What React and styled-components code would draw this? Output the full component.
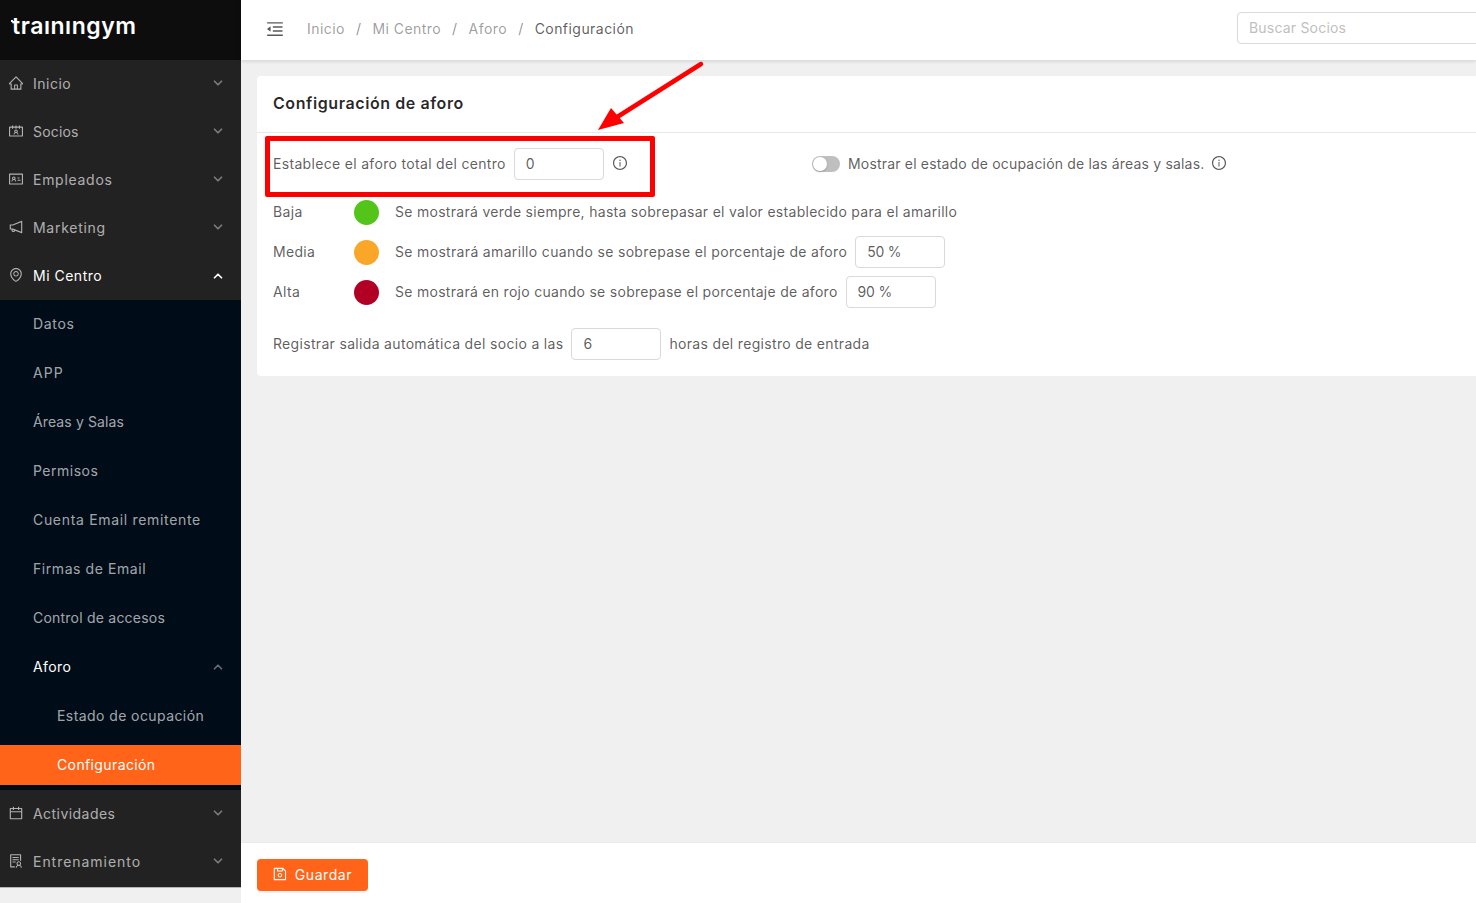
import React from "react";
import styled, { createGlobalStyle } from "styled-components";
import {
  AiOutlineHome,
  AiOutlineContacts,
  AiOutlineIdcard,
  AiOutlineNotification,
  AiOutlineEnvironment,
  AiOutlineCalendar,
  AiOutlineSolution,
  AiOutlineSave,
  AiOutlineInfoCircle,
  AiOutlineMenuFold,
} from "react-icons/ai";
import { ChevronDown, ChevronUp } from "lucide-react";

const Global = createGlobalStyle`
  html, body { margin: 0; padding: 0; height: 100%; overflow: hidden; }
  body {
    background: #f0f0f0;
    font-family: Inter, "Noto Sans", "Liberation Sans", sans-serif;
    font-size: 14px;
    letter-spacing: 0.33px;
  }
  * { box-sizing: border-box; }
`;

// track = letter spacing per label
const topBefore = [
  { label: "Inicio", Icon: AiOutlineHome, track: 0.5 },
  { label: "Socios", Icon: AiOutlineContacts, track: 0.17 },
  { label: "Empleados", Icon: AiOutlineIdcard, track: 0.72 },
  { label: "Marketing", Icon: AiOutlineNotification, track: 0.72 },
];
const subItems = [
  { label: "Datos", track: 0.7 },
  { label: "APP", track: 1.1 },
  { label: "Áreas y Salas", track: 0.12 },
  { label: "Permisos", track: 0.5 },
  { label: "Cuenta Email remitente", track: 0.68 },
  { label: "Firmas de Email", track: 0.57 },
  { label: "Control de accesos", track: 0.22 },
];
const topAfter = [
  { label: "Actividades", Icon: AiOutlineCalendar, track: 0.45 },
  { label: "Entrenamiento", Icon: AiOutlineSolution, track: 0.96 },
];

const App = () => {
  return (
    <Page>
      <Global />
      <Sidebar>
        <LogoBar>
          <Logo>traınıngym</Logo>
        </LogoBar>
        {topBefore.map(({ label, Icon, track }) => (
          <MenuItem key={label}>
            <MenuIcon><Icon size={16} /></MenuIcon>
            <MenuLabel $track={track}>{label}</MenuLabel>
            <Chevron><ChevronDown size={14} strokeWidth={3} /></Chevron>
          </MenuItem>
        ))}
        <MenuItem $open>
          <MenuIcon><AiOutlineEnvironment size={16} /></MenuIcon>
          <MenuLabel $track={0.5}>Mi Centro</MenuLabel>
          <Chevron $open $up><ChevronUp size={14} strokeWidth={3} /></Chevron>
        </MenuItem>
        <SubMenu>
          {subItems.map(({ label, track }) => (
            <SubItem key={label}><MenuLabel $track={track}>{label}</MenuLabel></SubItem>
          ))}
          <SubItem $open>
            <MenuLabel $track={0.4}>Aforo</MenuLabel>
            <Chevron $up><ChevronUp size={14} strokeWidth={3} /></Chevron>
          </SubItem>
          <SubItem $nested><MenuLabel $track={0.42}>Estado de ocupación</MenuLabel></SubItem>
          <SubItem $nested $active><MenuLabel $track={0.38}>Configuración</MenuLabel></SubItem>
        </SubMenu>
        {topAfter.map(({ label, Icon, track }) => (
          <MenuItem key={label}>
            <MenuIcon><Icon size={16} /></MenuIcon>
            <MenuLabel $track={track}>{label}</MenuLabel>
            <Chevron><ChevronDown size={14} strokeWidth={3} /></Chevron>
          </MenuItem>
        ))}
      </Sidebar>

      <Main>
        <TopBar>
          <FoldIcon><AiOutlineMenuFold size={20} /></FoldIcon>
          <Crumbs>
            <Crumb>Inicio</Crumb>
            <Slash>/</Slash>
            <Crumb>Mi Centro</Crumb>
            <Slash>/</Slash>
            <Crumb>Aforo</Crumb>
            <Slash>/</Slash>
            <Crumb $current>Configuración</Crumb>
          </Crumbs>
          <Search placeholder="Buscar Socios" />
        </TopBar>

        <Content>
          <Card>
            <CardHead>Configuración de aforo</CardHead>
            <CardBody>
              <Row>
                <TotalGroup>
                  <Text>Establece el aforo total del centro</Text>
                  <Field defaultValue="0" />
                  <Info $flush><AiOutlineInfoCircle size={16} /></Info>
                </TotalGroup>
                <Toggle />
                <Text $track={0.18}>Mostrar el estado de ocupación de las áreas y salas.</Text>
                <Info><AiOutlineInfoCircle size={16} /></Info>
              </Row>
              <Row>
                <Level>Baja</Level>
                <Dot $color="#52c41a" />
                <LevelText $track={0.29}>Se mostrará verde siempre, hasta sobrepasar el valor establecido para el amarillo</LevelText>
              </Row>
              <Row>
                <Level>Media</Level>
                <Dot $color="#faa628" />
                <LevelText $track={0.33}>Se mostrará amarillo cuando se sobrepase el porcentaje de aforo</LevelText>
                <Field defaultValue="50 %" />
              </Row>
              <Row>
                <Level>Alta</Level>
                <Dot $color="#b10024" />
                <LevelText $track={0.285}>Se mostrará en rojo cuando se sobrepase el porcentaje de aforo</LevelText>
                <Field defaultValue="90 %" />
              </Row>
              <ExitRow>
                <Text>Registrar salida automática del socio a las</Text>
                <Field defaultValue="6" />
                <Text>horas del registro de entrada</Text>
              </ExitRow>
            </CardBody>
          </Card>
        </Content>

        <Footer>
          <SaveButton>
            <AiOutlineSave size={16} />
            Guardar
          </SaveButton>
        </Footer>

        {/* annotation drawn over the screenshot */}
        <RedBox />
        <Arrow viewBox="0 0 120 80">
          <line x1="109" y1="5" x2="22" y2="60" stroke="#ff0000" strokeWidth="4.5" strokeLinecap="round" />
          <polygon points="6,71 19,49 32,64" fill="#ff0000" />
        </Arrow>
      </Main>
    </Page>
  );
};

export default App;

const Page = styled.div`
  display: flex;
  width: 100vw;
  height: 100vh;
  overflow: hidden;
`;

const Sidebar = styled.aside`
  flex: 0 0 241px;
  height: 888px;
  background: #222222;
  border-bottom: 1px solid #b5b5b5;
  color: rgba(255, 255, 255, 0.65);
`;

const LogoBar = styled.div`
  height: 60px;
  background: #0d0d0d;
  padding: 9px 0 0 12px;
`;

const Logo = styled.div`
  position: relative;
  color: #fff;
  font-family: Inter, sans-serif;
  font-size: 23px;
  font-weight: 600;
  letter-spacing: 0.55px;
  line-height: 34px;
  &::before {
    content: "";
    position: absolute;
    left: -1px;
    top: 11px;
    width: 2px;
    height: 2px;
    background: #fff;
  }
`;

const MenuItem = styled.div`
  display: flex;
  align-items: center;
  height: 48px;
  padding: 0 16px 0 8px;
  color: ${(p) => (p.$open ? "#fff" : "rgba(255, 255, 255, 0.65)")};
`;

const MenuIcon = styled.span`
  display: flex;
  width: 25px;
  margin-top: -3px;
  color: rgba(255, 255, 255, 0.65);
`;

const MenuLabel = styled.span`
  flex: 1;
  padding-bottom: 2px;
  letter-spacing: ${(p) => p.$track}px;
`;

const Chevron = styled.span`
  display: flex;
  margin-left: auto;
  margin-top: ${(p) => (p.$up ? "-1px" : "-3px")};
  color: ${(p) => (p.$open ? "#fff" : "rgba(255, 255, 255, 0.4)")};
`;

const SubMenu = styled.div`
  background: #000c17;
  padding: 4px 0 5px;
`;

const SubItem = styled.div`
  display: flex;
  align-items: center;
  height: 40px;
  margin-bottom: ${(p) => (p.$active ? "0" : "9px")};
  padding: 0 16px 0 ${(p) => (p.$nested ? "57px" : "33px")};
  background: ${(p) => (p.$active ? "#ff6418" : "transparent")};
  color: ${(p) => (p.$active || p.$open ? "#fff" : "rgba(255, 255, 255, 0.65)")};
`;

const Main = styled.main`
  position: relative;
  flex: 1;
  min-width: 0;
  display: flex;
  flex-direction: column;
  background: #f0f0f0;
`;

const TopBar = styled.header`
  display: flex;
  align-items: center;
  flex: 0 0 60px;
  padding-left: 24px;
  background: #fff;
  box-shadow: 0 1px 4px rgba(0, 21, 41, 0.15);
  position: relative;
`;

const FoldIcon = styled.span`
  display: flex;
  margin-top: -3px;
  color: #595959;
`;

const Crumbs = styled.nav`
  display: flex;
  gap: 11px;
  margin-left: 22px;
  margin-top: -4px;
  letter-spacing: 0.45px;
`;

const Crumb = styled.span`
  color: ${(p) => (p.$current ? "rgba(0, 0, 0, 0.65)" : "rgba(0, 0, 0, 0.4)")};
`;

const Slash = styled.span`
  color: rgba(0, 0, 0, 0.45);
`;

const Search = styled.input`
  width: 300px;
  height: 32px;
  margin-left: auto;
  margin-right: -61px;
  margin-top: -4px;
  padding: 0 11px 2px;
  border: 1px solid #d9d9d9;
  border-radius: 4px;
  font: inherit;
  letter-spacing: 0.2px;
  &::placeholder {
    color: #bfbfbf;
  }
`;

const Content = styled.div`
  flex: 1;
  padding: 16px 0 0 16px;
  overflow: hidden;
`;

const Card = styled.section`
  width: 1260px;
  background: #fff;
  border-radius: 4px;
`;

const CardHead = styled.div`
  height: 57px;
  padding: 0 16px 2px;
  display: flex;
  align-items: center;
  border-bottom: 1px solid #e8e8e8;
  color: rgba(0, 0, 0, 0.85);
  font-size: 16px;
  font-weight: 600;
  letter-spacing: 0.58px;
`;

const CardBody = styled.div`
  display: flex;
  flex-direction: column;
  gap: 8px;
  padding: 15px 16px 16px;
  color: rgba(0, 0, 0, 0.65);
`;

const Row = styled.div`
  display: flex;
  align-items: center;
  min-height: 32px;
  &:first-child {
    margin-bottom: 8px;
  }
`;

const ExitRow = styled(Row)`
  gap: 8px;
  margin-top: 12px;
`;

const TotalGroup = styled.div`
  display: flex;
  align-items: center;
  gap: 8px;
  width: 539px;
`;

const Text = styled.span`
  padding-bottom: 2px;
  letter-spacing: ${(p) => (p.$track ? `${p.$track}px` : "0.32px")};
`;

const Field = styled.input`
  width: 90px;
  height: 32px;
  padding: 0 10px 2px 11px;
  border: 1px solid #d9d9d9;
  border-radius: 4px;
  background: #fff;
  color: rgba(0, 0, 0, 0.65);
  font: inherit;
  letter-spacing: -0.2px;
  outline: none;
`;

const Info = styled.span`
  display: flex;
  margin-left: ${(p) => (p.$flush ? "0" : "7px")};
  margin-top: -2px;
  color: #595959;
`;

const Toggle = styled.span`
  position: relative;
  width: 28px;
  height: 16px;
  margin-right: 8px;
  border-radius: 8px;
  background: #bfbfbf;
  &::after {
    content: "";
    position: absolute;
    left: 1px;
    top: 1px;
    width: 14px;
    height: 14px;
    border-radius: 50%;
    background: #fff;
    box-shadow: 0 1px 2px rgba(0, 35, 11, 0.2);
  }
`;

const Level = styled.span`
  width: 81px;
  padding-bottom: 2px;
`;

const Dot = styled.span`
  width: 25px;
  height: 25px;
  border-radius: 50%;
  background: ${(p) => p.$color};
`;

const LevelText = styled.span`
  margin: 0 8px 0 16px;
  padding-bottom: 2px;
  letter-spacing: ${(p) => p.$track}px;
`;

const Footer = styled.footer`
  flex: 0 0 61px;
  display: flex;
  align-items: center;
  padding: 3px 0 0 16px;
  background: #fff;
  border-top: 1px solid #eaeaea;
`;

const SaveButton = styled.button`
  display: flex;
  align-items: center;
  gap: 7px;
  height: 32px;
  padding: 0 16px 1px 15px;
  width: 111px;
  border: none;
  border-radius: 4px;
  background: #ff6418;
  color: #fff;
  font: inherit;
  letter-spacing: 0.55px;
  box-shadow: 0 2px 0 rgba(0, 0, 0, 0.045);
`;

const RedBox = styled.div`
  position: absolute;
  left: 24px;
  top: 136px;
  width: 390px;
  height: 61px;
  border: 5px solid #ff0000;
  border-radius: 2px;
  pointer-events: none;
`;

const Arrow = styled.svg`
  position: absolute;
  left: 351px;
  top: 59px;
  width: 120px;
  height: 80px;
  pointer-events: none;
`;
